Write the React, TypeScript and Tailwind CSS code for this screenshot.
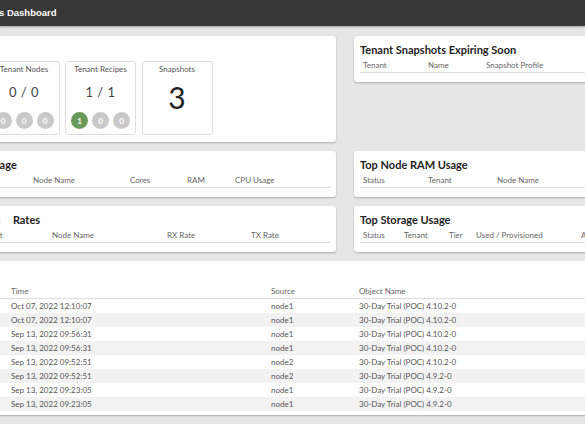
import React from 'react';

type Col = { label: string; w: string };

const font = "font-['Lato','Noto_Sans',sans-serif]";

function HeaderRow({ cols }: { cols: Col[] }) {
  return (
    <div className="flex h-[15px] items-center border-b border-[#dcdcdc] text-[8px] text-[#666]">
      {cols.map((c) => (
        <div key={c.label} className={`${c.w} shrink-0 truncate px-[3px] whitespace-nowrap`}>
          {c.label}
        </div>
      ))}
    </div>
  );
}

function TableCard({ title, cols }: { title: React.ReactNode; cols: Col[] }) {
  return (
    <div className="rounded-[3px] bg-white px-[6px] pt-[6px] pb-[9px] shadow-[0_1px_2px_rgba(0,0,0,0.25)]">
      <h3 className="h-[16px] text-[11px] leading-[16px] font-bold whitespace-nowrap text-[#222]">{title}</h3>
      <HeaderRow cols={cols} />
    </div>
  );
}

function Dot({ n, green }: { n: number; green?: boolean }) {
  return (
    <span
      className={`flex h-[17px] w-[17px] items-center justify-center rounded-full text-[8px] font-bold text-white ${
        green ? 'bg-[#6a9a5b]' : 'bg-[#c9c9c9]'
      }`}
    >
      {n}
    </span>
  );
}

function StatBox({ label, value, dots }: { label: string; value: string; dots: number[] }) {
  return (
    <div className="flex h-[74px] w-[71px] shrink-0 flex-col items-center rounded-[3px] border border-[#dedede] pt-[1px]">
      <span className="text-[8px] leading-[12px] text-[#555]">{label}</span>
      <span className="mt-[9px] text-[13px] leading-[16px] tracking-[0.5px] text-[#444]">{value}</span>
      <div className="mt-[12px] flex gap-[4px]">
        {dots.map((d, i) => (
          <Dot key={i} n={d} green={i === 0 && d > 0} />
        ))}
      </div>
    </div>
  );
}

const events = [
  ['Oct 07, 2022 12:10:07', 'node1', '30-Day Trial (POC) 4.10.2-0'],
  ['Oct 07, 2022 12:10:07', 'node1', '30-Day Trial (POC) 4.10.2-0'],
  ['Sep 13, 2022 09:56:31', 'node1', '30-Day Trial (POC) 4.10.2-0'],
  ['Sep 13, 2022 09:56:31', 'node1', '30-Day Trial (POC) 4.10.2-0'],
  ['Sep 13, 2022 09:52:51', 'node2', '30-Day Trial (POC) 4.10.2-0'],
  ['Sep 13, 2022 09:52:51', 'node2', '30-Day Trial (POC) 4.9.2-0'],
  ['Sep 13, 2022 09:23:05', 'node1', '30-Day Trial (POC) 4.9.2-0'],
  ['Sep 13, 2022 09:23:05', 'node1', '30-Day Trial (POC) 4.9.2-0'],
];

export default function App() {
  return (
    <div className={`h-[424px] w-[585px] overflow-hidden bg-[#e6e6e6] ${font}`}>
      <header className="flex h-[26px] items-center bg-[#373737] shadow-[0_1px_2px_rgba(0,0,0,0.3)]">
        <span className="-ml-[1px] font-['Liberation_Sans',Arial,sans-serif] text-[9.5px] font-bold text-white">
          s Dashboard
        </span>
      </header>

      <div className="-ml-[94px] mt-[10px] flex w-[878px] flex-col gap-[9px]">
        <div className="grid grid-cols-[430px_430px] items-start gap-x-[18px] gap-y-[9px]">
          {/* summary */}
          <div className="rounded-[3px] bg-white px-[6px] pt-[6px] pb-[7px] shadow-[0_1px_2px_rgba(0,0,0,0.25)]">
            <h3 className="h-[16px] text-[11px] leading-[16px] font-bold text-[#222]">Summary</h3>
            <div className="mt-[3px] flex gap-[5.5px]">
              <StatBox label="Tenants" value="1 / 1" dots={[1, 0, 0]} />
              <StatBox label="Tenant Nodes" value="0 / 0" dots={[0, 0, 0]} />
              <StatBox label="Tenant Recipes" value="1 / 1" dots={[1, 0, 0]} />
              <div className="flex h-[74px] w-[71px] shrink-0 flex-col items-center rounded-[3px] border border-[#dedede] pt-[1px]">
                <span className="text-[8px] leading-[12px] text-[#555]">Snapshots</span>
                <span className="mt-[4px] text-[30px] leading-[36px] text-[#222]">3</span>
              </div>
            </div>
          </div>

          <TableCard
            title="Tenant Snapshots Expiring Soon"
            cols={[
              { label: 'Tenant', w: 'w-[65px]' },
              { label: 'Name', w: 'w-[58px]' },
              { label: 'Snapshot Profile', w: 'w-[120px]' },
              { label: 'Expires', w: 'w-[100px]' },
            ]}
          />

          <TableCard
            title="Top Node CPU Usage"
            cols={[
              { label: 'Status', w: 'w-[50px]' },
              { label: 'Tenant', w: 'w-[68px]' },
              { label: 'Node Name', w: 'w-[97px]' },
              { label: 'Cores', w: 'w-[57px]' },
              { label: 'RAM', w: 'w-[48px]' },
              { label: 'CPU Usage', w: 'w-[98px]' },
            ]}
          />

          <TableCard
            title="Top Node RAM Usage"
            cols={[
              { label: 'Status', w: 'w-[65px]' },
              { label: 'Tenant', w: 'w-[69px]' },
              { label: 'Node Name', w: 'w-[100px]' },
              { label: 'Cores', w: 'w-[60px]' },
              { label: 'RAM Usage', w: 'w-[100px]' },
            ]}
          />

          <TableCard
            title={
              <>
                <span className="-ml-[5px]">Top Node Network</span> <span className="ml-[10px]">Rates</span>
              </>
            }
            cols={[
              { label: 'Status', w: 'w-[64px]' },
              { label: 'Tenant', w: 'w-[73px]' },
              { label: 'Node Name', w: 'w-[115px]' },
              { label: 'RX Rate', w: 'w-[84px]' },
              { label: 'TX Rate', w: 'w-[82px]' },
            ]}
          />

          <TableCard
            title="Top Storage Usage"
            cols={[
              { label: 'Status', w: 'w-[41px]' },
              { label: 'Tenant', w: 'w-[45px]' },
              { label: 'Tier', w: 'w-[27px]' },
              { label: 'Used / Provisioned', w: 'w-[105px]' },
              { label: 'Available', w: 'w-[90px]' },
            ]}
          />
        </div>

        {/* event log */}
        <div className="rounded-[3px] bg-white px-[6px] pt-[7px] pb-[4px] shadow-[0_1px_2px_rgba(0,0,0,0.25)]">
          <h3 className="h-[16px] text-[11px] leading-[16px] font-bold text-[#222]">Events</h3>
          <HeaderRow
            cols={[
              { label: 'Type', w: 'w-[96px]' },
              { label: 'Time', w: 'w-[260px]' },
              { label: 'Source', w: 'w-[88px]' },
              { label: 'Object Name', w: 'w-[300px]' },
            ]}
          />
          {events.map((e, i) => (
            <div
              key={i}
              className={`flex h-[14px] items-center text-[8px] text-[#555] ${i % 2 === 1 ? 'bg-[#f2f2f2]' : ''}`}
            >
              <div className="w-[96px] shrink-0 px-[3px]" />
              <div className="w-[260px] shrink-0 px-[3px]">{e[0]}</div>
              <div className="w-[88px] shrink-0 px-[3px]">{e[1]}</div>
              <div className="w-[300px] shrink-0 px-[3px]">{e[2]}</div>
            </div>
          ))}
        </div>
      </div>
    </div>
  );
}
